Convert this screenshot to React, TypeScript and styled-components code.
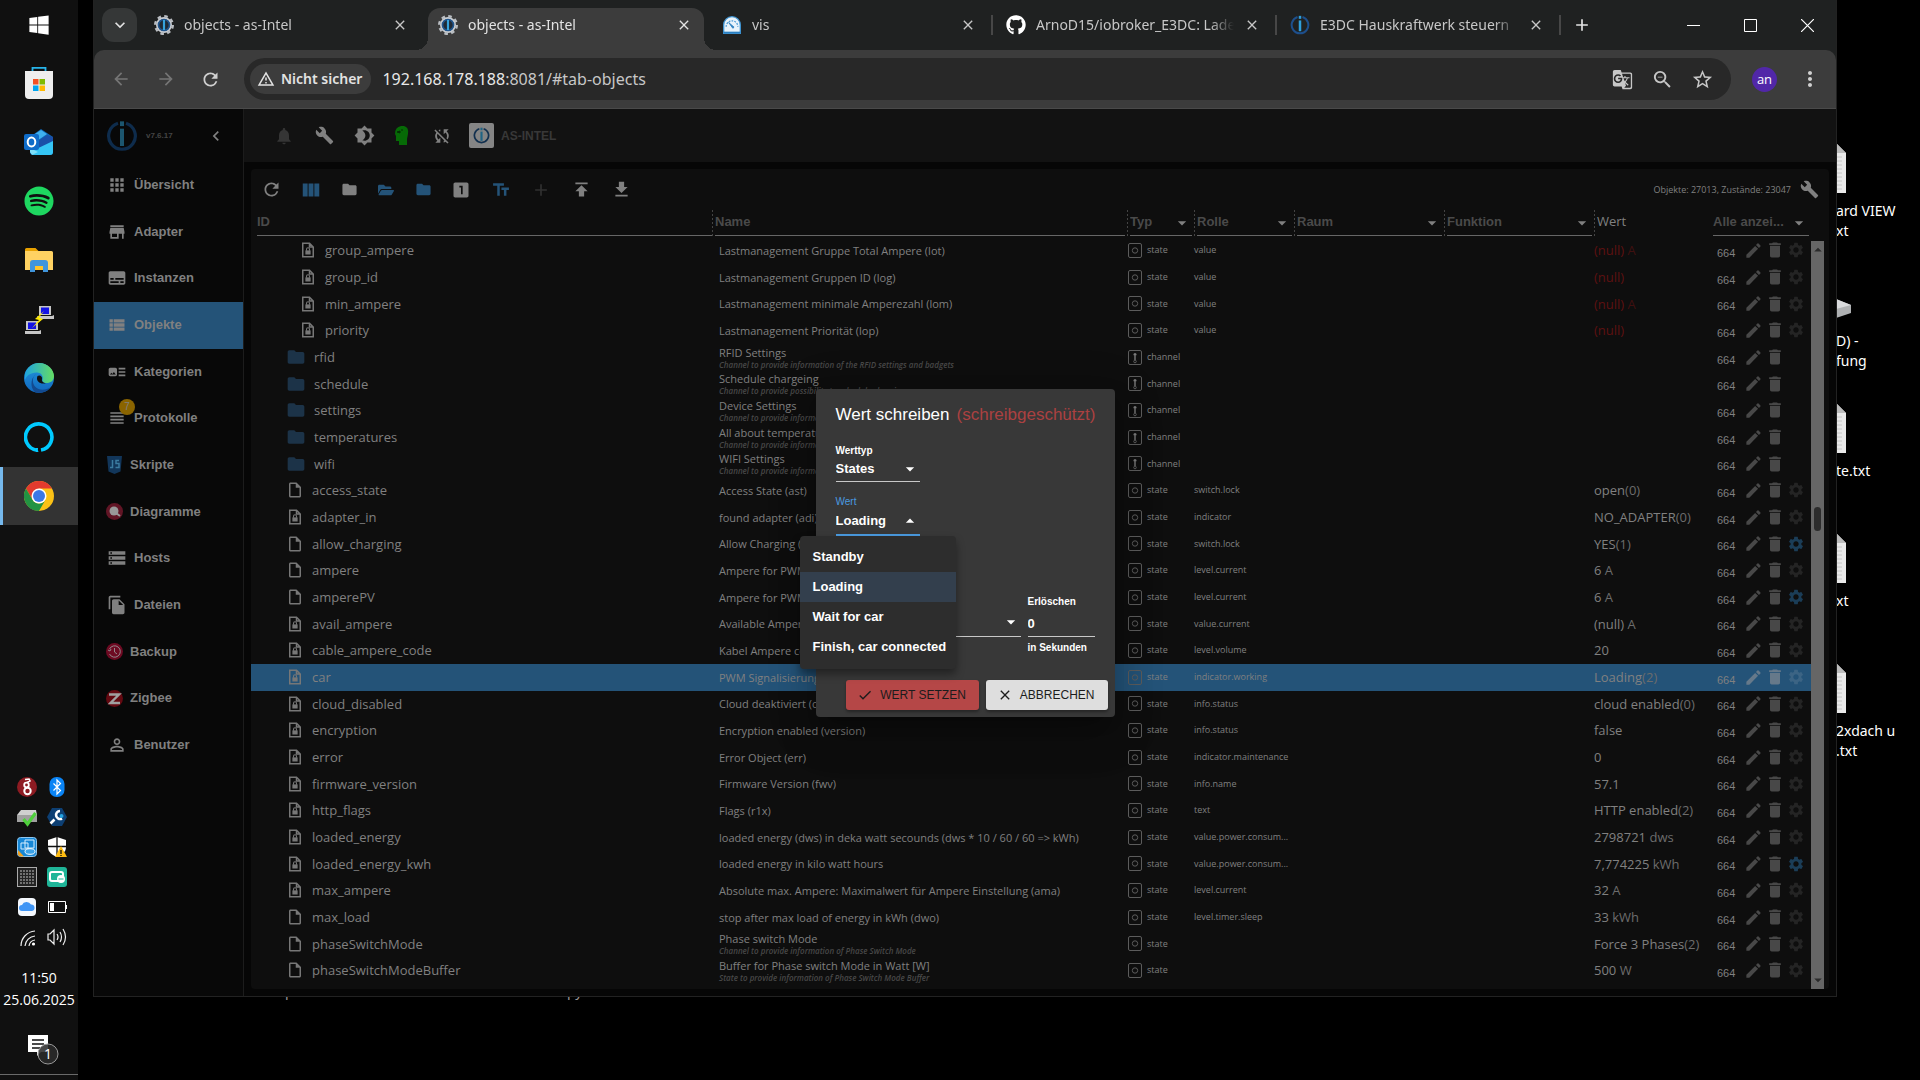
import React from 'react';
import styled, { createGlobalStyle, css } from 'styled-components';
import {
  MdNotifications, MdBuild, MdBrightness4, MdSyncDisabled, MdViewColumn, MdFolder, MdLooksOne, MdTextFields, MdAdd,
  MdPublish, MdGetApp, MdRefresh, MdApps, MdStore, MdSubtitles, MdViewList, MdArtTrack, MdViewHeadline, MdStorage,
  MdFileCopy, MdPersonOutline, MdChevronLeft, MdGTranslate, MdZoomOut, MdStarBorder, MdSettings, MdEdit, MdDelete,
  MdCheck, MdClose, MdArrowBack, MdArrowForward, MdMoreVert, MdOutlineInsertDriveFile, MdKeyboardArrowDown,
  MdArrowDropDown, MdArrowDropUp, MdOutlineWarningAmber,
} from 'react-icons/md';
import { FaGithub, FaFolderOpen, FaWindows, FaSpotify } from 'react-icons/fa';

const ui = '"Open Sans", "Noto Sans", sans-serif';
const chrome = '"Noto Sans", "Open Sans", sans-serif';
const arial = '"Liberation Sans", Arial, sans-serif';
const blue = '#245378';
const grey = '#808080';

const GlobalStyle = createGlobalStyle`
  *, *::before, *::after { box-sizing: border-box; }
  html, body, #root { height: 100%; }
  body { margin: 0; background: #000; overflow: hidden; font-family: ${ui}; }
  button, input, select { font: inherit; color: inherit; }
  button { display: flex; align-items: center; justify-content: center; padding: 0; border: 0; background: none; }
  svg { display: block; flex: none; }
  a { color: inherit; text-decoration: none; }
`;

/* ---------- desktop and task bar ---------- */
const Screen = styled.div`
  display: flex;
  height: 100vh;
  background: #000;
`;
const Taskbar = styled.nav`
  display: flex;
  flex-direction: column;
  flex: none;
  width: 78px;
  background: #101010;
  color: #fff;
`;
const StartButton = styled.button`
  height: 49px;
  margin-bottom: 5px;
`;
const TaskButtons = styled.div`
  display: flex;
  flex-direction: column;
  gap: 1px;
`;
const TaskButton = styled.button<{ $active?: boolean }>`
  height: 58px;
  ${p => p.$active && css`
    background: #333;
    border-left: 3px solid #76b9ed;
    padding-right: 3px;
  `}
`;
const Tray = styled.div`
  display: grid;
  grid-template-columns: 20px 20px;
  grid-auto-rows: 30px;
  column-gap: 10px;
  place-items: center;
  padding-left: 17px;
  margin-top: auto;
`;
const Clock = styled.time`
  padding: 15px 0 20px;
  font-size: 14px;
  line-height: 22px;
  text-align: center;
`;
const NoticeButton = styled.button`
  height: 38px;
  padding-left: 10px;
  margin-bottom: 5px;
`;
const ShowDesktop = styled.div`
  height: 6px;
  border-top: 1px solid #6a6a6a;
`;
const Desktop = styled.main`
  position: relative;
  flex: 1;
  overflow: hidden;
  color: #fff;
  font-family: ${chrome};
  font-size: 14px;
  line-height: 20px;
`;
const DesktopColumn = styled.div`
  position: absolute;
  top: 143px;
  right: 0;
  width: 84px;
`;
const DesktopItem = styled.div`
  height: 130px;
  white-space: pre-line;
`;
const DesktopIcon = styled.div`
  display: flex;
  align-items: center;
  height: 50px;
  margin-bottom: 8px;
`;
const HiddenLabel = styled.span<{ $left: number }>`
  position: absolute;
  top: 981px;
  left: ${p => p.$left}px;
  color: #999;
`;

/* ---------- browser window ---------- */
const BrowserWindow = styled.section`
  position: absolute;
  inset: 0 83px 83px 15px;
  display: flex;
  flex-direction: column;
  border: solid #222;
  border-width: 0 1px 1px;
  background: #1f2121;
  font-family: ${ui};
`;
const TabStrip = styled.div`
  display: flex;
  align-items: stretch;
  height: 50px;
  padding-left: 8px;
`;
const TabSearch = styled.button`
  align-self: center;
  width: 35px;
  height: 34px;
  margin-right: 7px;
  border-radius: 12px;
  background: #353737;
  color: #e3e3e3;
`;
const Tab = styled.div<{ $active?: boolean; $line?: boolean }>`
  position: relative;
  display: flex;
  align-items: center;
  gap: 10px;
  flex: 0 1 276px;
  min-width: 0;
  margin: 8px 8px 0 0;
  padding: 0 12px 8px 10px;
  border-radius: 12px 12px 0 0;
  background: ${p => (p.$active ? '#3c3c3c' : 'transparent')};
  color: ${p => (p.$active ? '#e3e3e3' : '#c7c7c7')};
  font-family: ${chrome};
  font-size: 14px;
  ${p => p.$active && css`
    &::before, &::after {
      content: '';
      position: absolute;
      bottom: 0;
      width: 12px;
      height: 12px;
    }
    &::before { left: -12px; background: radial-gradient(circle at 0 0, transparent 12px, #3c3c3c 12px); }
    &::after { right: -12px; background: radial-gradient(circle at 100% 0, transparent 12px, #3c3c3c 12px); }
  `}
  ${p => p.$line && css`
    &::after {
      content: '';
      position: absolute;
      top: 7px;
      right: -5px;
      width: 2px;
      height: 20px;
      background: #474747;
    }
  `}
`;
const TabTitle = styled.span`
  flex: 1;
  overflow: hidden;
  white-space: nowrap;
  mask-image: linear-gradient(90deg, #000 calc(100% - 24px), transparent);
`;
const NewTab = styled.button`
  width: 36px;
  color: #e3e3e3;
`;
const WindowButtons = styled.div`
  display: flex;
  margin-left: auto;
`;
const WindowButton = styled.button`
  width: 57px;
  color: #fff;
`;
const AddressBar = styled.div`
  display: flex;
  align-items: center;
  height: 59px;
  padding: 0 4px;
  border-bottom: 1px solid #4a4a4a;
  border-radius: 10px 10px 0 0;
  background: #3c3c3c;
  color: #c7c7c7;
`;
const NavButton = styled.button<{ $off?: boolean }>`
  width: 45px;
  height: 42px;
  color: ${p => (p.$off ? '#757575' : '#d0d0d0')};
`;
const Omnibox = styled.div`
  display: flex;
  align-items: center;
  flex: 1;
  height: 42px;
  margin: 0 11px;
  padding: 0 9px 0 6px;
  border-radius: 21px;
  background: #282828;
  font-family: ${chrome};
  font-size: 16px;
`;
const Chip = styled.button`
  gap: 6px;
  height: 30px;
  margin-right: 11px;
  padding: 0 9px 0 7px;
  border-radius: 15px;
  background: #3c3c3c;
  color: #e3e3e3;
  font-size: 14px;
  font-weight: 600;
`;
const Url = styled.a`
  flex: 1;
  b { color: #e8e8e8; font-weight: 400; }
`;
const OmniButton = styled.button`
  width: 40px;
  height: 40px;
`;
const Avatar = styled.button`
  width: 25px;
  height: 25px;
  margin: 0 10px;
  border-radius: 50%;
  background: #5127a8;
  color: #fff;
  font-size: 13px;
`;

/* ---------- admin page ---------- */
const Page = styled.div`
  position: relative;
  display: flex;
  flex: 1;
  min-height: 0;
`;
const Sidebar = styled.aside`
  flex: none;
  width: 150px;
  border-right: 1px solid #1c1c1c;
  background: #080808;
  color: ${grey};
`;
const Brand = styled.div`
  display: flex;
  align-items: center;
  gap: 8px;
  height: 53px;
  padding: 0 17px 0 12px;
`;
const Version = styled.span`
  flex: 1;
  color: #444;
  font: bold 8px/12px ${arial};
`;
const Menu = styled.ul`
  margin: 0;
  padding: 0;
  list-style: none;
`;
const MenuItem = styled.li`
  height: 47px;
  &:nth-child(3n) { height: 46px; }
`;
const MenuLink = styled.a<{ $active?: boolean; $image?: boolean }>`
  position: relative;
  display: flex;
  align-items: center;
  gap: 7px;
  height: 100%;
  padding: 0 0 2px ${p => (p.$image ? 12 : 13)}px;
  background: ${p => (p.$active ? blue : 'transparent')};
  font: bold 13px/20px ${arial};
`;
const MenuBadge = styled.span`
  position: absolute;
  top: 3px;
  left: 25px;
  width: 16px;
  height: 16px;
  border-radius: 50%;
  background: #8a6400;
  font: 10px/16px ${arial};
  text-align: center;
`;
const Main = styled.div`
  display: flex;
  flex-direction: column;
  flex: 1;
  min-width: 0;
  background: #060606;
`;
const TopBar = styled.header`
  display: flex;
  align-items: center;
  height: 53px;
  padding-left: 20px;
  background: #121212;
  color: ${grey};
`;
const IconButton = styled.button<{ $w?: number; $color?: string }>`
  width: ${p => p.$w ?? 40}px;
  height: 40px;
  color: ${p => p.$color ?? grey};
`;
const HostButton = styled.button`
  gap: 7px;
  margin-left: 7px;
  color: #383838;
  font: bold 12px/16px ${arial};
`;
const HostLogo = styled.span`
  display: flex;
  align-items: center;
  justify-content: center;
  width: 25px;
  height: 25px;
  border-radius: 2px;
  background: #858585;
`;
const Panel = styled.section`
  display: flex;
  flex-direction: column;
  flex: 1;
  min-height: 0;
  margin: 7px;
  padding-right: 5px;
  border-radius: 4px;
  background: #0e0e0e;
  color: ${grey};
`;
const ListToolbar = styled.div`
  display: flex;
  align-items: center;
  height: 41px;
`;
const Counter = styled.span`
  margin: 0 3px 0 auto;
  font-size: 9px;
  line-height: 12px;
`;
const ListArea = styled.div`
  display: flex;
  flex: 1;
  min-height: 0;
`;
const TableClip = styled.div`
  flex: 1;
  min-width: 0;
  overflow: hidden;
`;
const Table = styled.table`
  width: 100%;
  table-layout: fixed;
  border-collapse: collapse;
  th { padding: 0; text-align: left; white-space: nowrap; }
  td { padding: 0 0 1px; white-space: nowrap; }
`;
const Col = styled.col<{ $w?: number }>`
  ${p => p.$w && css`width: ${p.$w}px;`}
`;
const HeadCell = styled.th<{ $line?: boolean; $first?: boolean }>`
  height: 27px;
  vertical-align: top;
  font: bold 13px/20px ${arial};
  color: #4a4a4a;
  > * { margin-left: ${p => (p.$first ? 6 : 3)}px; }
  ${p => p.$line && css`
    background: linear-gradient(#444 50%, transparent 50%) 0 0 / 1px 4px repeat-y;
  `}
`;
const FilterInput = styled.input`
  display: block;
  width: calc(100% - 5px);
  height: 26px;
  padding: 0 0 2px;
  border: 0;
  border-bottom: 1px solid #666;
  background: none;
  outline: 0;
  &::placeholder { color: #4a4a4a; opacity: 1; }
`;
const SelectBox = styled.span<{ $focus?: boolean; $head?: boolean; $h: number }>`
  display: grid;
  align-items: center;
  height: ${p => p.$h}px;
  margin-right: ${p => (p.$head ? 2 : 0)}px;
  border-bottom: ${p => (p.$focus ? '2px solid #4a9be0' : p.$head ? '1px solid #666' : '1px solid #c8c8c8')};
  > * { grid-area: 1 / 1; }
  > svg { justify-self: end; pointer-events: none; color: ${p => (p.$head ? grey : '#fff')}; }
  select {
    width: 100%;
    padding: 0 20px ${p => (p.$head ? 2 : 0)}px 0;
    border: 0;
    outline: 0;
    appearance: none;
    background: none;
    text-overflow: ellipsis;
  }
`;
const ValueHead = styled.span`
  display: block;
  font: 13px/22px ${ui};
  color: ${grey};
`;
const Row = styled.tr<{ $selected?: boolean }>`
  height: 27px;
  &:nth-child(3n) { height: 26px; }
  ${p => p.$selected && css`background: ${blue};`}
`;
const IdCell = styled.div<{ $nested?: boolean; $folder?: boolean }>`
  display: flex;
  align-items: center;
  gap: 8px;
  padding-left: ${p => (p.$nested ? 48 : 35)}px;
  font-size: 13px;
  line-height: 20px;
  > svg { width: ${p => (p.$folder ? 20 : 18)}px; color: ${p => (p.$folder ? '#1c3348' : '#777')}; }
`;
const NameCell = styled.div`
  overflow: hidden;
  padding-left: 7px;
  font-size: 11px;
  line-height: 15px;
  text-overflow: ellipsis;
`;
const Description = styled.div`
  color: #484848;
  font-size: 8px;
  font-style: italic;
  font-weight: 600;
  line-height: 10px;
`;
const TypeCell = styled.div`
  display: flex;
  align-items: center;
  gap: 5px;
  padding-left: 1px;
  font-size: 9px;
  line-height: 12px;
`;
const RoleCell = styled.div`
  font-size: 9px;
  line-height: 12px;
`;
const ValueCell = styled.div<{ $missing?: boolean }>`
  font-size: 13px;
  line-height: 20px;
  color: ${p => (p.$missing ? '#5e1111' : grey)};
`;
const Unit = styled.span<{ $missing?: boolean }>`
  color: ${p => (p.$missing ? '#401010' : '#6c6c6c')};
`;
const Actions = styled.div`
  display: flex;
  align-items: center;
  height: 24px;
  padding-left: 7px;
`;
const Access = styled.span`
  width: 26px;
  padding-top: 5px;
  font: 11px/16px ${arial};
`;
const RowButton = styled.button<{ $tone: string }>`
  width: 21px;
  height: 22px;
  color: ${p => p.$tone};
`;
const Scrollbar = styled.div`
  display: flex;
  flex-direction: column;
  align-items: center;
  flex: none;
  width: 13px;
  margin-top: 31px;
  background: #666;
  color: #2a2a2a;
`;
const Track = styled.div`
  display: flex;
  flex-direction: column;
  align-items: center;
  flex: 1;
  &::before { content: ''; flex: 36; }
  &::after { content: ''; flex: 64; }
`;
const Thumb = styled.div`
  width: 7px;
  height: 24px;
  border-radius: 4px;
  background: #2c2c2c;
`;

/* ---------- dialog ---------- */
const Overlay = styled.div`
  position: absolute;
  inset: 0;
  display: flex;
  align-items: center;
  justify-content: center;
`;
const Dialog = styled.form`
  width: 299px;
  border-radius: 4px;
  background: #383838;
  box-shadow: 0 11px 15px -7px #0003, 0 24px 38px 3px #00000024, 0 9px 46px 8px #0000001f;
  color: #fff;
  font: bold 13px/20px ${arial};
`;
const DialogTitle = styled.h2`
  display: flex;
  gap: 7px;
  margin: 0;
  padding: 16px 20px 20px;
  font: 17px/20px ${arial};
  white-space: nowrap;
`;
const Protected = styled.span`
  color: #ab4141;
`;
const Fields = styled.div`
  display: flex;
  flex-direction: column;
  gap: 14px;
  padding: 0 20px 26px;
`;
const Field = styled.div<{ $w?: number }>`
  position: relative;
  display: flex;
  flex-direction: column;
  ${p => (p.$w ? css`width: ${p.$w}px;` : css`flex: 1;`)}
`;
const FieldLabel = styled.label<{ $focus?: boolean }>`
  height: 12px;
  color: ${p => (p.$focus ? '#4a9be0' : '#fff')};
  font-size: 10px;
  font-weight: ${p => (p.$focus ? 400 : 700)};
  line-height: 12px;
`;
const FieldRow = styled.div`
  display: flex;
  gap: 7px;
  padding-top: 46px;
`;
const NumberInput = styled.input`
  width: 100%;
  height: 29px;
  padding: 3px 0 0;
  border: 0;
  border-bottom: 1px solid #c8c8c8;
  outline: 0;
  background: none;
`;
const Helper = styled.span`
  margin-top: 5px;
  font-size: 10px;
  line-height: 12px;
`;
const Options = styled.ul`
  position: absolute;
  z-index: 2;
  top: 100%;
  left: -36px;
  margin: 0;
  padding: 6px 0 7px;
  border-radius: 4px;
  background: #2d2d2d;
  box-shadow: 0 5px 8px #0006;
  list-style: none;
  white-space: nowrap;
`;
const Option = styled.li<{ $selected?: boolean }>`
  padding: 5px 10px 5px 13px;
  background: ${p => (p.$selected ? '#333f4d' : 'transparent')};
`;
const DialogActions = styled.div`
  display: flex;
  justify-content: flex-end;
  gap: 7px;
  padding: 0 7px 7px;
`;
const DialogButton = styled.button<{ $danger?: boolean }>`
  gap: 7px;
  height: 30px;
  padding: 0 13px 0 11px;
  border-radius: 3px;
  background: ${p => (p.$danger ? '#b54747' : '#dedede')};
  box-shadow: 0 2px 3px #0005;
  color: #1c1c1c;
  font: 12px/16px ${arial};
`;

/* ---------- drawings ---------- */
const Broker = ({ size = 24, ring = '#1d4f8c', bar = '#2fa0dc' }) => (
  <svg width={size} height={size} viewBox="0 0 24 24" fill="none">
    <path d="M9 2.400a10 10 0 1 0 6 0" stroke={ring} strokeWidth="2.400" />
    <path d="M12 6.500v13" stroke={bar} strokeWidth="3" />
    <path d="M12 1v3.600" stroke={bar} strokeWidth="3" />
  </svg>
);
const BrokerGear = () => (
  <svg width="20" height="20" viewBox="0 0 24 24" fill="none">
    <circle cx="12" cy="12" r="10.600" stroke="#b9bdc2" strokeWidth="2.800" strokeDasharray="4.300 4.020" />
    <circle cx="12" cy="12" r="8.400" stroke="#c7cbd0" strokeWidth="2.400" />
    <circle cx="12" cy="12" r="6.600" fill="#202a36" stroke="#20568f" strokeWidth="2" />
    <path d="M12 6v12" stroke="#36a3dd" strokeWidth="2.600" />
  </svg>
);
const VisIcon = () => (
  <svg width="20" height="20" viewBox="0 0 24 24">
    <path d="M2 22V12a10 10 0 0 1 20 0v10z" fill="#e8f3fb" stroke="#3f94d2" strokeWidth="1.600" />
    <path d="M5 14a7 7 0 0 1 14 0" fill="none" stroke="#3f94d2" strokeWidth="1.400" strokeDasharray="2 1.400" />
    <path d="M8 9l5 7 1.500-1.400z" fill="#2b7fc0" stroke="#2b7fc0" />
    <path d="M2 21h20" stroke="#2b7fc0" strokeWidth="2" />
  </svg>
);
const StoreIcon = () => (
  <svg width="30" height="34" viewBox="0 0 30 34">
    <path d="M8.500 7V1.900h13V7" fill="none" stroke="#27b4ea" strokeWidth="1.800" />
    <path d="M1 5h28v24a4 4 0 0 1-4 4H5a4 4 0 0 1-4-4z" fill="#eee" />
    <path d="M9 13h5.500v5.500H9z" fill="#f25022" /><path d="M15.500 13H21v5.500h-5.500z" fill="#7fba00" />
    <path d="M9 19.500h5.500V25H9z" fill="#00a4ef" /><path d="M15.500 19.500H21V25h-5.500z" fill="#ffb900" />
  </svg>
);
const OutlookIcon = () => (
  <svg width="30" height="28" viewBox="0 0 30 28">
    <path d="M6 9L17 1l12 8v15a3 3 0 0 1-3 3H9a3 3 0 0 1-3-3z" fill="#1066b5" />
    <path d="M8 8l9-6 6 4-13 9z" fill="#3fb0ee" /><path d="M29 9v6L14 23 7 18l16-11z" fill="#1a4fa8" />
    <path d="M29 13v11a3 3 0 0 1-3 3H9l-3-3z" fill="#35c5f5" /><path d="M6 20l8 4-6 3-2-3z" fill="#7fe0fa" />
    <rect y="6" width="15" height="16" rx="2" fill="#0f6cc9" />
    <ellipse cx="7.500" cy="14" rx="3.800" ry="4.500" fill="none" stroke="#fff" strokeWidth="2" />
  </svg>
);
const ExplorerIcon = () => (
  <svg width="28" height="24" viewBox="0 0 28 24">
    <path d="M0 1.500A1.500 1.500 0 0 1 1.500 0h9l3 3H0z" fill="#e8a100" /><path d="M0 3h26.500A1.500 1.500 0 0 1 28 4.500V22H0z" fill="#ffd262" />
    <path d="M5 24v-9a3 3 0 0 1 3-3h12a3 3 0 0 1 3 3v9h-5v-6h-8v6z" fill="#3f95dc" /><path d="M10 18h8v4h-8z" fill="#ffc328" />
  </svg>
);
const PuttyIcon = () => (
  <svg width="29" height="29" viewBox="0 0 29 29">
    <path d="M14 1h12v9H14zM12 11h15l2-1v4H14zM1 16h12v9H1zM0 26h14l2-1v4H0z" fill="#c6c6c6" />
    <path d="M16 2.500h8V9h-8zM3 17.500h8V24H3z" fill="#1313e6" />
    <path d="M19 6l-9 8 4 1-7 8 11-9-4-1.500z" fill="#ffeb00" />
  </svg>
);
const EdgeIcon = () => (
  <svg width="30" height="30" viewBox="0 0 30 30">
    <defs>
      <linearGradient id="edgeTop" x2="1"><stop stopColor="#1fa5e0" /><stop offset="1" stopColor="#65dd62" /></linearGradient>
      <linearGradient id="edgeSide" y2="1" x2="0"><stop stopColor="#2297dd" /><stop offset="1" stopColor="#1167be" /></linearGradient>
    </defs>
    <circle cx="15" cy="15" r="15" fill="url(#edgeSide)" />
    <path d="M1 11C3 4 9 0 15 0c9 0 15 7 15 13 0 5-4 7-7 7-4 0-5-1.500-4.500-3 1-2 0-7-5-7.500C7 9 2 13 1 17z" fill="url(#edgeTop)" />
    <path d="M12 11c-4 3-4 9-1 12.500 4 4.500 11 4 16 .5-4 5-10 7-15 5.500C7 27 5 17 12 11z" fill="#124a90" />
    <path d="M13.500 13c2-1.500 5 0 4.500 3-.5 2 1 4 4 4-4 2-11-1-8.500-7z" fill="#101010" />
  </svg>
);
const AlexaIcon = () => (
  <svg width="30" height="30" viewBox="0 0 30 30">
    <path d="M13 28.200A13.200 13.200 0 1 1 17 28.100" fill="none" stroke="#00caff" strokeWidth="3.600" />
    <path d="M12 26v4h2.500q-1-2-.5-4z" fill="#00caff" />
  </svg>
);
const ChromeIcon = () => (
  <svg width="30" height="30" viewBox="0 0 30 30">
    <circle cx="15" cy="15" r="15" fill="#fbc116" />
    <path d="M2 7.500A15 15 0 0 1 28 7.500H15L8.500 18.800z" fill="#e33b2e" />
    <path d="M2 7.500l6.500 11.300a7.500 7.500 0 0 0 13 0L15 30A15 15 0 0 1 2 7.500z" fill="#229342" />
    <circle cx="15" cy="15" r="7.500" fill="#fff" /><circle cx="15" cy="15" r="6" fill="#3b78e7" />
  </svg>
);
const NoticeIcon = () => (
  <svg width="32" height="32" viewBox="0 0 32 32">
    <path d="M0 1h20v17h-7l-4 4v-4H0z" fill="#fff" /><path d="M4 6h12M4 10h12M4 14h8" stroke="#101010" strokeWidth="1.300" />
    <circle cx="20" cy="20" r="10" fill="#2b2b2bdd" stroke="#999" />
    <text x="20" y="25" textAnchor="middle" fill="#fff" fontSize="14" fontFamily="Open Sans">1</text>
  </svg>
);
const trayIcons: [string, React.ReactNode][] = [
  ['Dragon', <><circle cx="10" cy="10" r="10" fill="#8d1b22" /><path d="M8 2.500l4-.5 1 2-3 1.500" fill="none" stroke="#fff" strokeWidth="1.600" /><circle cx="9.500" cy="8" r="2.300" fill="none" stroke="#fff" strokeWidth="1.800" /><circle cx="10.500" cy="14" r="3.200" fill="none" stroke="#fff" strokeWidth="2" /></>],
  ['Bluetooth', <><rect x="2.500" width="15" height="20" rx="7" fill="#0a84f5" /><path d="M6.500 6.500l7 7L10 17V3l3.500 3.500-7 7" fill="none" stroke="#fff" strokeWidth="1.200" /></>],
  ['Hardware', <><path d="M0 8l4-5h15l1 5v7H0z" fill="#d0d0d0" /><path d="M0 8h20v7H0z" fill="#a0a0a0" /><path d="M6.500 12l4 5L18.500 6" fill="none" stroke="#4fd03c" strokeWidth="3.200" /></>],
  ['Maintenance', <><path d="M5 1h10l5 9-5 9H5L0 10z" fill="#0d3f73" /><path d="M3.500 16.500l4-4M13 4a4 4 0 1 0 2 7.500" fill="none" stroke="#fff" strokeWidth="2.600" /><circle cx="14.500" cy="9" r="2" fill="#24a3e0" /></>],
  ['Graphics', <><rect x=".5" y=".5" width="19" height="19" rx="3" fill="#1687d6" stroke="#8fc6ee" /><path d="M1 13l6 6.500H3L1 18z" fill="#f0a020" /><path d="M4 6h7v6H4zM8 3h9v8H8z" fill="none" stroke="#d5eeff" /><ellipse cx="13" cy="14.500" rx="5" ry="2.800" fill="#3ba3e8" stroke="#fff" /></>],
  ['Security', <><path d="M10 0l9 3v7c0 5-4 8-9 10C5 18 1 15 1 10V3z" fill="#fff" /><path d="M10 0v20M1 9.500h18" stroke="#101010" strokeWidth="1.300" /><path d="M14 9l6 11H8z" fill="#fdbb11" /><path d="M14 13v4M14 18v1" stroke="#101010" strokeWidth="1.300" /></>],
  ['Memory', <><rect x=".5" y=".5" width="19" height="19" fill="#222" stroke="#aaa" /><path d="M3 4h14M3 7h14M3 10h14M3 13h14M3 16h14" stroke="#8a8a8a" strokeDasharray="2 1" strokeWidth="1.600" /></>],
  ['Screen share', <><rect width="20" height="20" rx="3" fill="#1fb598" /><rect x="3" y="5" width="13" height="9" rx="2" fill="none" stroke="#fff" strokeWidth="2" /><circle cx="14" cy="12" r="4" fill="#fff" /><path d="M11.500 12h5" stroke="#1fb598" /></>],
  ['Cloud', <><rect x="1" y="1" width="18" height="18" rx="4" fill="#f4f8fd" /><path d="M5 14a3 3 0 0 1 0-6 5 5 0 0 1 9-.5 3.300 3.300 0 0 1 1 6.500z" fill="#3f95f5" /></>],
  ['Battery', <><path d="M1.500 4.500h17v11h-17zM19.500 8v4" fill="none" stroke="#fff" /><path d="M3 6h4v8H3z" fill="#fff" /></>],
  ['Network', <><path d="M4 19A15 15 0 0 1 18 4M8 19a11 11 0 0 1 10-10M12 19a7 7 0 0 1 6-6" fill="none" stroke="#eee" strokeWidth="1.200" /><circle cx="16.500" cy="17" r="1.600" fill="#fff" /></>],
  ['Sound', <path d="M1 7v6h2l4 4V3L3 7zM10 7q2 3 0 6M13 5q3 5 0 10M16 2q5 8 0 16" fill="none" stroke="#eee" strokeWidth="1.200" />],
];
const HeadIcon = () => (
  <svg width="16" height="20" viewBox="0 0 16 20">
    <path d="M6 0h3q5 1 4 8l-1 5v6H4v-4H1v-5L0 8q0-7 6-8z" fill="#066b06" /><path d="M2 6l3-1v2zM7 3v2" stroke="#032e03" fill="#032e03" />
  </svg>
);
const LockedFile = () => (
  <svg width="18" height="18" viewBox="0 0 24 24" fill="none" stroke="currentColor" strokeWidth="2">
    <path d="M5 3h9l5 5v13H5zM14 3v5h5" /><path d="M8.500 12.500h7V18h-7z" fill="currentColor" stroke="none" /><path d="M10 13v-2a2 2 0 0 1 4 0v2" strokeWidth="1.400" />
  </svg>
);
const StateIcon = () => (
  <svg width="14" height="15" viewBox="0 0 14 15" fill="none" stroke="#5c5c5c"><rect x=".5" y=".5" width="13" height="14" rx="1.500" /><circle cx="7" cy="7.500" r="2.700" /></svg>
);
const ChannelIcon = () => (
  <svg width="14" height="15" viewBox="0 0 14 15" fill="none" stroke="#5c5c5c"><rect x=".5" y=".5" width="13" height="14" rx="1.500" /><path d="M7 3v7M5.500 4.500h3" stroke="#7a7a7a" strokeWidth="1.400" /><circle cx="7" cy="11.500" r="1.300" /></svg>
);
const JsIcon = () => (
  <svg width="17" height="18" viewBox="0 0 17 18"><path d="M1 0h15l-1.500 15.500L8.500 18l-6-2.500z" fill="#12365a" /><path d="M6.500 4v7.500H4M13 4.500h-3v3h3v4H9.500" fill="none" stroke="#3b7ba0" strokeWidth="1.500" /></svg>
);
const ChartIcon = () => (
  <svg width="17" height="17" viewBox="0 0 17 17"><circle cx="8.500" cy="8.500" r="8.500" fill="#611525" /><circle cx="8" cy="8" r="4.500" fill="#999" /><path d="M10 10l4 3" stroke="#999" strokeWidth="2" /></svg>
);
const BackupIcon = () => (
  <svg width="17" height="17" viewBox="0 0 17 17" fill="none" stroke="#93858a"><circle cx="8.500" cy="8.500" r="8.500" fill="#6d0a22" stroke="none" /><path d="M3.500 6a5.700 5.700 0 1 1 0 5M8.500 5v4l2.500 2M2 7l2 1 1-2" /></svg>
);
const ZigbeeIcon = () => (
  <svg width="17" height="17" viewBox="0 0 17 17"><circle cx="8.500" cy="8.500" r="8.500" fill="#640911" /><path d="M3 4.500h10L4.500 13H14" fill="none" stroke="#a0a0a0" strokeWidth="2.400" /></svg>
);
const FileIcon = () => (
  <svg width="11" height="50" viewBox="0 0 11 50"><path d="M0 0l10 10v40H0z" fill="#e9e9e9" /><path d="M0 0l10 10H0z" fill="#bcbcbc" /><path d="M0 14h6M0 18h6M0 22h6M0 26h6M0 30h6M0 34h6M0 38h6M0 42h6M0 46h6" stroke="#c6c6c6" /></svg>
);
const DriveIcon = () => (
  <svg width="16" height="50" viewBox="0 0 16 50"><path d="M0 26l15 6v8L0 45z" fill="#aeb0b2" /><path d="M0 26l15 6-15 4z" fill="#d9dadc" /></svg>
);

/* ---------- data ---------- */
type Item = { id: string; name: string; desc?: string; kind?: 'folder' | 'open' | 'nested'; role?: string; value?: string; tail?: string; missing?: boolean; custom?: boolean; selected?: boolean };
const items: Item[] = [
  { id: 'group_ampere', name: 'Lastmanagement Gruppe Total Ampere (lot)', kind: 'nested', role: 'value', value: '(null)', tail: ' A', missing: true },
  { id: 'group_id', name: 'Lastmanagement Gruppen ID (log)', kind: 'nested', role: 'value', value: '(null)', missing: true },
  { id: 'min_ampere', name: 'Lastmanagement minimale Amperezahl (lom)', kind: 'nested', role: 'value', value: '(null)', tail: ' A', missing: true },
  { id: 'priority', name: 'Lastmanagement Priorität (lop)', kind: 'nested', role: 'value', value: '(null)', missing: true },
  { id: 'rfid', name: 'RFID Settings', desc: 'Channel to provide information of the RFID settings and badgets', kind: 'folder' },
  { id: 'schedule', name: 'Schedule chargeing', desc: 'Channel to provide possibility to schedule charging', kind: 'folder' },
  { id: 'settings', name: 'Device Settings', desc: 'Channel to provide informations of the settings', kind: 'folder' },
  { id: 'temperatures', name: 'All about temperatures', desc: 'Channel to provide informations of temperatures', kind: 'folder' },
  { id: 'wifi', name: 'WIFI Settings', desc: 'Channel to provide informations of the WIFI', kind: 'folder' },
  { id: 'access_state', name: 'Access State (ast)', kind: 'open', role: 'switch.lock', value: 'open', tail: '(0)' },
  { id: 'adapter_in', name: 'found adapter (adi)', role: 'indicator', value: 'NO_ADAPTER', tail: '(0)' },
  { id: 'allow_charging', name: 'Allow Charging (alw)', kind: 'open', role: 'switch.lock', value: 'YES', tail: '(1)', custom: true },
  { id: 'ampere', name: 'Ampere for PWM (amp)', kind: 'open', role: 'level.current', value: '6', tail: ' A' },
  { id: 'amperePV', name: 'Ampere for PWM (amx)', kind: 'open', role: 'level.current', value: '6', tail: ' A', custom: true },
  { id: 'avail_ampere', name: 'Available Ampere', role: 'value.current', value: '(null)', tail: ' A' },
  { id: 'cable_ampere_code', name: 'Kabel Ampere codierung (cbl)', role: 'level.volume', value: '20' },
  { id: 'car', name: 'PWM Signalisierung (car)', role: 'indicator.working', value: 'Loading', tail: '(2)', selected: true },
  { id: 'cloud_disabled', name: 'Cloud deaktiviert (cdi)', role: 'info.status', value: 'cloud enabled', tail: '(0)' },
  { id: 'encryption', name: 'Encryption enabled (version)', role: 'info.status', value: 'false' },
  { id: 'error', name: 'Error Object (err)', role: 'indicator.maintenance', value: '0' },
  { id: 'firmware_version', name: 'Firmware Version (fwv)', role: 'info.name', value: '57.1' },
  { id: 'http_flags', name: 'Flags (r1x)', role: 'text', value: 'HTTP enabled', tail: '(2)' },
  { id: 'loaded_energy', name: 'loaded energy (dws) in deka watt secounds (dws * 10 / 60 / 60 => kWh)', role: 'value.power.consum...', value: '2798721', tail: ' dws' },
  { id: 'loaded_energy_kwh', name: 'loaded energy in kilo watt hours', role: 'value.power.consum...', value: '7,774225', tail: ' kWh', custom: true },
  { id: 'max_ampere', name: 'Absolute max. Ampere: Maximalwert für Ampere Einstellung (ama)', role: 'level.current', value: '32', tail: ' A' },
  { id: 'max_load', name: 'stop after max load of energy in kWh (dwo)', kind: 'open', role: 'level.timer.sleep', value: '33', tail: ' kWh' },
  { id: 'phaseSwitchMode', name: 'Phase switch Mode', desc: 'Channel to provide information of Phase Switch Mode', kind: 'open', value: 'Force 3 Phases', tail: '(2)' },
  { id: 'phaseSwitchModeBuffer', name: 'Buffer for Phase switch Mode in Watt [W]', desc: 'State to provide information of Phase Switch Mode Buffer', kind: 'open', value: '500', tail: ' W' },
  { id: 'phaseSwitchModeEnabled', name: 'Enabled phase switching', desc: 'State to provide information of Phase Switch Mode Enabled', kind: 'open', value: 'false' },
];
const menu: { label: string; icon: React.ReactNode; image?: boolean; active?: boolean; badge?: string }[] = [
  { label: 'Übersicht', icon: <MdApps size={20} /> },
  { label: 'Adapter', icon: <MdStore size={20} /> },
  { label: 'Instanzen', icon: <MdSubtitles size={20} /> },
  { label: 'Objekte', icon: <MdViewList size={20} />, active: true },
  { label: 'Kategorien', icon: <MdArtTrack size={20} /> },
  { label: 'Protokolle', icon: <MdViewHeadline size={20} />, badge: '7' },
  { label: 'Skripte', icon: <JsIcon />, image: true },
  { label: 'Diagramme', icon: <ChartIcon />, image: true },
  { label: 'Hosts', icon: <MdStorage size={20} /> },
  { label: 'Dateien', icon: <MdFileCopy size={20} /> },
  { label: 'Backup', icon: <BackupIcon />, image: true },
  { label: 'Zigbee', icon: <ZigbeeIcon />, image: true },
  { label: 'Benutzer', icon: <MdPersonOutline size={20} /> },
];
const tabs = [
  { title: 'objects - as-Intel', icon: <BrokerGear /> },
  { title: 'objects - as-Intel', icon: <BrokerGear />, active: true },
  { title: 'vis', icon: <VisIcon />, line: true },
  { title: 'ArnoD15/iobroker_E3DC: Ladesteuerung', icon: <FaGithub size={20} color="#fff" />, line: true },
  { title: 'E3DC Hauskraftwerk steuern', icon: <Broker size={20} />, line: true },
];
const tasks: [string, React.ReactNode][] = [
  ['Store', <StoreIcon />], ['Outlook', <OutlookIcon />], ['Spotify', <FaSpotify size={30} color="#1ed760" />], ['Explorer', <ExplorerIcon />],
  ['PuTTY', <PuttyIcon />], ['Edge', <EdgeIcon />], ['Alexa', <AlexaIcon />], ['Chrome', <ChromeIcon />],
];
const desktop = [['file', 'ard VIEW\nxt'], ['drive', 'D) -\nfung'], ['file', 'te.txt'], ['file', 'xt'], ['file', '2xdach u\n.txt']];

const HeadSelect = ({ label }: { label: string }) => (
  <SelectBox $head $h={26}>
    <select aria-label={label}><option>{label}</option></select>
    <MdArrowDropDown size={20} />
  </SelectBox>
);

const ObjectRow = ({ item }: { item: Item }) => {
  const folder = item.kind === 'folder';
  const tone = item.selected ? '#66798a' : '#484848';
  return (
    <Row $selected={item.selected}>
      <td><IdCell $nested={item.kind === 'nested'} $folder={folder}>
        {folder ? <MdFolder size={22} /> : item.kind === 'open' ? <MdOutlineInsertDriveFile size={18} /> : <LockedFile />}{item.id}
      </IdCell></td>
      <td><NameCell>{item.name}{item.desc && <Description>{item.desc}</Description>}</NameCell></td>
      <td><TypeCell>{folder ? <ChannelIcon /> : <StateIcon />}{folder ? 'channel' : 'state'}</TypeCell></td>
      <td><RoleCell>{item.role}</RoleCell></td>
      <td /><td />
      <td><ValueCell $missing={item.missing}>{item.value}<Unit $missing={item.missing}>{item.tail}</Unit></ValueCell></td>
      <td><Actions>
        <Access>664</Access>
        <RowButton $tone={tone} aria-label="Bearbeiten"><MdEdit size={19} /></RowButton>
        <RowButton $tone={tone} aria-label="Löschen"><MdDelete size={20} /></RowButton>
        {!folder && <RowButton $tone={item.custom ? '#1b3d57' : item.selected ? '#3c6484' : '#242424'} aria-label="Einstellungen"><MdSettings size={18} /></RowButton>}
      </Actions></td>
    </Row>
  );
};

export default function App() {
  return (
    <>
      <GlobalStyle />
      <Screen>
        <Taskbar>
          <StartButton aria-label="Start"><FaWindows size={22} /></StartButton>
          <TaskButtons>{tasks.map(([name, icon]) => <TaskButton key={name} aria-label={name} $active={name === 'Chrome'}>{icon}</TaskButton>)}</TaskButtons>
          <Tray>{trayIcons.map(([name, art]) => <svg key={name} role="img" aria-label={name} width="20" height="20" viewBox="0 0 20 20">{art}</svg>)}</Tray>
          <Clock>11:50<br />25.06.2025</Clock>
          <NoticeButton aria-label="Benachrichtigungen"><NoticeIcon /></NoticeButton>
          <ShowDesktop />
        </Taskbar>
        <Desktop>
          <DesktopColumn>
            {desktop.map(([kind, label]) => (
              <DesktopItem key={label}><DesktopIcon>{kind === 'file' ? <FileIcon /> : <DriveIcon />}</DesktopIcon>{label}</DesktopItem>
            ))}
          </DesktopColumn>
          <HiddenLabel $left={207}>p</HiddenLabel>
          <HiddenLabel $left={489}>py</HiddenLabel>
          <BrowserWindow>
            <TabStrip>
              <TabSearch aria-label="Tabs suchen"><MdKeyboardArrowDown size={20} /></TabSearch>
              {tabs.map((tab, i) => (
                <Tab key={i} $active={tab.active} $line={tab.line}>
                  {tab.icon}<TabTitle>{tab.title}</TabTitle><button aria-label="Tab schließen"><MdClose size={16} /></button>
                </Tab>
              ))}
              <NewTab aria-label="Neuer Tab"><MdAdd size={20} /></NewTab>
              <WindowButtons>
                <WindowButton aria-label="Minimieren"><svg width="13" height="13" viewBox="0 0 13 13"><path d="M0 6.500h13" stroke="#fff" /></svg></WindowButton>
                <WindowButton aria-label="Maximieren"><svg width="13" height="13" viewBox="0 0 13 13"><path d="M.5.5h12v12H.5z" stroke="#fff" fill="none" /></svg></WindowButton>
                <WindowButton aria-label="Schließen"><svg width="13" height="13" viewBox="0 0 13 13"><path d="M0 0l13 13M13 0L0 13" stroke="#fff" strokeWidth="1.200" /></svg></WindowButton>
              </WindowButtons>
            </TabStrip>
            <AddressBar>
              <NavButton $off aria-label="Zurück"><MdArrowBack size={20} /></NavButton>
              <NavButton $off aria-label="Vor"><MdArrowForward size={20} /></NavButton>
              <NavButton aria-label="Neu laden"><MdRefresh size={21} /></NavButton>
              <Omnibox>
                <Chip><MdOutlineWarningAmber size={18} />Nicht sicher</Chip>
                <Url href="#tab-objects"><b>192.168.178.188</b>:8081/#tab-objects</Url>
                <OmniButton aria-label="Übersetzen"><MdGTranslate size={21} /></OmniButton>
                <OmniButton aria-label="Zoom"><MdZoomOut size={23} /></OmniButton>
                <OmniButton aria-label="Lesezeichen"><MdStarBorder size={23} /></OmniButton>
              </Omnibox>
              <Avatar>an</Avatar>
              <NavButton aria-label="Menü"><MdMoreVert size={24} /></NavButton>
            </AddressBar>
            <Page>
              <Sidebar>
                <Brand><Broker size={32} ring="#0e2c4c" bar="#1c566f" /><Version>v7.6.17</Version><button aria-label="Menü einklappen"><MdChevronLeft size={20} /></button></Brand>
                <Menu>{menu.map(m => (
                  <MenuItem key={m.label}><MenuLink href="#" $active={m.active} $image={m.image}>{m.icon}{m.badge && <MenuBadge>{m.badge}</MenuBadge>}{m.label}</MenuLink></MenuItem>
                ))}</Menu>
              </Sidebar>
              <Main>
                <TopBar>
                  <IconButton $color="#353535" aria-label="Meldungen"><MdNotifications size={20} /></IconButton>
                  <IconButton aria-label="Systemeinstellungen"><MdBuild size={19} /></IconButton>
                  <IconButton aria-label="Farbschema"><MdBrightness4 size={21} /></IconButton>
                  <IconButton $w={38} aria-label="Expertenmodus"><HeadIcon /></IconButton>
                  <IconButton aria-label="Synchronisation"><MdSyncDisabled size={20} /></IconButton>
                  <HostButton><HostLogo><Broker size={17} ring="#12304f" bar="#1f6485" /></HostLogo>AS-INTEL</HostButton>
                </TopBar>
                <Panel>
                  <ListToolbar>
                    <IconButton aria-label="Aktualisieren"><MdRefresh size={21} /></IconButton>
                    <IconButton $color={blue} aria-label="Spalten"><MdViewColumn size={22} /></IconButton>
                    <IconButton $w={36} aria-label="Alle zuklappen"><MdFolder size={17} /></IconButton>
                    <IconButton $w={38} $color={blue} aria-label="Alle aufklappen"><FaFolderOpen size={16} /></IconButton>
                    <IconButton $w={36} $color={blue} aria-label="Ebene"><MdFolder size={17} /></IconButton>
                    <IconButton aria-label="Eine Ebene"><MdLooksOne size={20} /></IconButton>
                    <IconButton $color={blue} aria-label="Beschreibungen"><MdTextFields size={20} /></IconButton>
                    <IconButton $color="#303030" aria-label="Hinzufügen"><MdAdd size={20} /></IconButton>
                    <IconButton aria-label="Import"><MdPublish size={21} /></IconButton>
                    <IconButton aria-label="Export"><MdGetApp size={21} /></IconButton>
                    <Counter>Objekte: 27013, Zustände: 23047</Counter>
                    <IconButton $w={30} aria-label="Spalteneinstellungen"><MdBuild size={19} /></IconButton>
                  </ListToolbar>
                  <ListArea>
                    <TableClip>
                      <Table>
                        <colgroup><Col $w={461} /><Col /><Col $w={67} /><Col $w={100} /><Col $w={150} /><Col $w={150} /><Col $w={116} /><Col $w={101} /></colgroup>
                        <thead><tr>
                          <HeadCell $first><FilterInput aria-label="ID" placeholder="ID" /></HeadCell>
                          <HeadCell $line><FilterInput aria-label="Name" placeholder="Name" /></HeadCell>
                          {['Typ', 'Rolle', 'Raum', 'Funktion'].map(l => <HeadCell key={l} $line><HeadSelect label={l} /></HeadCell>)}
                          <HeadCell $line><ValueHead>Wert</ValueHead></HeadCell>
                          <HeadCell><HeadSelect label="Alle anzei..." /></HeadCell>
                        </tr></thead>
                        <tbody>{items.map(item => <ObjectRow key={item.id} item={item} />)}</tbody>
                      </Table>
                    </TableClip>
                    <Scrollbar><MdArrowDropUp size={18} /><Track><Thumb /></Track><MdArrowDropDown size={18} /></Scrollbar>
                  </ListArea>
                </Panel>
              </Main>
              <Overlay>
                <Dialog role="dialog" aria-labelledby="dialog-title">
                  <DialogTitle id="dialog-title">Wert schreiben<Protected>(schreibgeschützt)</Protected></DialogTitle>
                  <Fields>
                    <Field $w={84}>
                      <FieldLabel htmlFor="value-type">Werttyp</FieldLabel>
                      <SelectBox $h={25}><select id="value-type"><option>States</option></select><MdArrowDropDown size={20} /></SelectBox>
                    </Field>
                    <Field $w={84}>
                      <FieldLabel htmlFor="value" $focus>Wert</FieldLabel>
                      <SelectBox $focus $h={28}><select id="value"><option>Loading</option></select><MdArrowDropUp size={20} /></SelectBox>
                      <Options role="listbox">
                        {['Standby', 'Loading', 'Wait for car', 'Finish, car connected'].map(o => <Option key={o} role="option" $selected={o === 'Loading'}>{o}</Option>)}
                      </Options>
                    </Field>
                    <FieldRow>
                      <Field>
                        <FieldLabel htmlFor="quality" />
                        <SelectBox $h={29}><select id="quality" /><MdArrowDropDown size={20} /></SelectBox>
                      </Field>
                      <Field $w={67}>
                        <FieldLabel htmlFor="expire">Erlöschen</FieldLabel>
                        <NumberInput id="expire" defaultValue="0" />
                        <Helper>in Sekunden</Helper>
                      </Field>
                    </FieldRow>
                  </Fields>
                  <DialogActions>
                    <DialogButton type="button" $danger><MdCheck size={16} />WERT SETZEN</DialogButton>
                    <DialogButton type="button"><MdClose size={16} />ABBRECHEN</DialogButton>
                  </DialogActions>
                </Dialog>
              </Overlay>
            </Page>
          </BrowserWindow>
        </Desktop>
      </Screen>
    </>
  );
}
